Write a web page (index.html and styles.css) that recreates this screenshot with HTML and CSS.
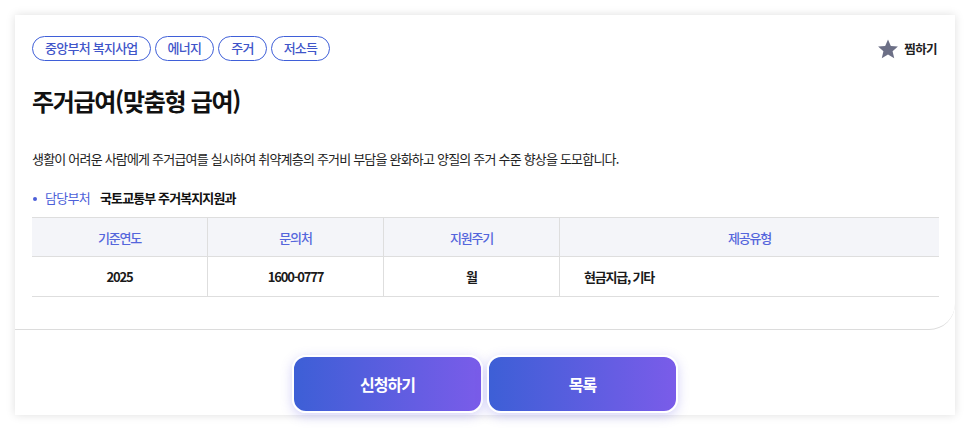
FILE: index.html
```html
<!DOCTYPE html>
<html lang="ko">
<head>
  <meta charset="UTF-8">
  <title>주거급여(맞춤형 급여)</title>
  <link rel="stylesheet" href="styles.css">
</head>
<body>
  <div class="card">
    <section class="detail">
      <div class="detail-head">
        <ul class="tags">
          <li class="tag">중앙부처 복지사업</li>
          <li class="tag">에너지</li>
          <li class="tag">주거</li>
          <li class="tag">저소득</li>
        </ul>
        <button class="fav" type="button">
          <svg class="fav-icon" viewBox="0 0 24 24" width="22" height="22" aria-hidden="true">
            <path d="M12 1.6l3.1 7.1 7.7.7-5.8 5.1 1.8 7.6L12 18.1l-6.8 4 1.8-7.6L1.2 9.4l7.7-.7z" fill="currentColor"/>
          </svg>
          <span>찜하기</span>
        </button>
      </div>

      <h1 class="title">주거급여(맞춤형 급여)</h1>

      <p class="desc">생활이 어려운 사람에게 주거급여를 실시하여 취약계층의 주거비 부담을 완화하고 양질의 주거 수준 향상을 도모합니다.</p>

      <p class="dept">
        <span class="dept-label">담당부처</span>
        <span class="dept-name">국토교통부 주거복지지원과</span>
      </p>

      <table class="info">
        <thead>
          <tr>
            <th>기준연도</th>
            <th>문의처</th>
            <th>지원주기</th>
            <th>제공유형</th>
          </tr>
        </thead>
        <tbody>
          <tr>
            <td>2025</td>
            <td>1600-0777</td>
            <td>월</td>
            <td class="left">현금지급, 기타</td>
          </tr>
        </tbody>
      </table>
    </section>

    <div class="actions">
      <button class="btn" type="button">신청하기</button>
      <button class="btn" type="button">목록</button>
    </div>
  </div>
</body>
</html>
```

FILE: styles.css
```css
body {
  margin: 0;
  padding: 15px;
  background-color: #fff;
  font-family: "Noto Sans CJK KR", "Noto Sans", sans-serif;
  color: #222;
}
ul, p, h1 {
  margin: 0;
  padding: 0;
}
.card {
  width: 940px;
  height: 400px;
  background-color: #fff;
  box-shadow: 0 0 9px rgba(0,0,0,0.13);
  display: flex;
  flex-direction: column;
}
.detail {
  padding: 21px 16px 32px 17px;
  border-bottom: 1px solid #dcdcdc;
  border-bottom-right-radius: 26px;
}
.detail-head {
  display: flex;
  justify-content: space-between;
  align-items: center;
}
.tags {
  list-style: none;
  display: flex;
  gap: 4px;
}
.tag {
  height: 23px;
  line-height: 22px;
  padding: 0 12px;
  border: 1px solid #3f5fd8;
  border-radius: 13px;
  color: #3f55c9;
  font-size: 13px;
  font-weight: 500;
  letter-spacing: -0.75px;
}
.fav {
  display: flex;
  align-items: center;
  gap: 5px;
  margin-right: 2px;
  padding: 0;
  border: none;
  background: none;
  font-family: inherit;
  font-size: 12.5px;
  font-weight: 700;
  letter-spacing: -0.6px;
  color: #222;
  cursor: pointer;
}
.fav-icon {
  color: #6c6f86;
}
.title {
  margin-top: 24px;
  font-size: 24px;
  line-height: 32px;
  font-weight: 700;
  letter-spacing: -1.3px;
  color: #111;
}
.desc {
  margin-top: 32px;
  font-size: 13px;
  line-height: 20px;
  letter-spacing: -0.8px;
  color: #222;
}
.dept {
  margin-top: 19px;
  font-size: 13px;
  line-height: 20px;
  letter-spacing: -0.7px;
  display: flex;
  align-items: center;
}
.dept-label {
  position: relative;
  padding-left: 13px;
  margin-right: 10px;
  color: #4c5fd9;
}
.dept-label::before {
  content: "";
  position: absolute;
  left: 1px;
  top: 9px;
  width: 4px;
  height: 4px;
  border-radius: 50%;
  background-color: #4c5fd9;
}
.dept-name {
  font-weight: 700;
  letter-spacing: -0.9px;
  color: #111;
}
.info {
  margin-top: 9px;
  width: 100%;
  border-collapse: collapse;
  table-layout: fixed;
  font-size: 13px;
  letter-spacing: -1.2px;
}
.info th, .info td {
  border-top: 1px solid #dedede;
  border-bottom: 1px solid #dedede;
  border-left: 1px solid #dedede;
  text-align: center;
  padding: 0;
}
.info th:first-child, .info td:first-child {
  border-left: none;
}
.info th {
  height: 38px;
  background-color: #f4f5f9;
  color: #5466dc;
  font-weight: 500;
}
.info th:nth-child(-n+3) {
  width: 175px;
}
.info td {
  height: 39px;
  font-weight: 700;
  color: #1a1a1a;
}
.info td.left {
  text-align: left;
  padding-left: 24px;
}
.actions {
  display: flex;
  justify-content: center;
  gap: 4px;
  padding-top: 25px;
}
.btn {
  width: 191px;
  height: 58px;
  border: 2px solid #fff;
  border-radius: 14px;
  background: linear-gradient(90deg, #3d5fd6, #7a5ce9);
  box-shadow: 0 3px 12px rgba(96,88,226,0.28);
  color: #fff;
  font-family: inherit;
  font-size: 16px;
  font-weight: 700;
  letter-spacing: -1px;
  cursor: pointer;
}
```
